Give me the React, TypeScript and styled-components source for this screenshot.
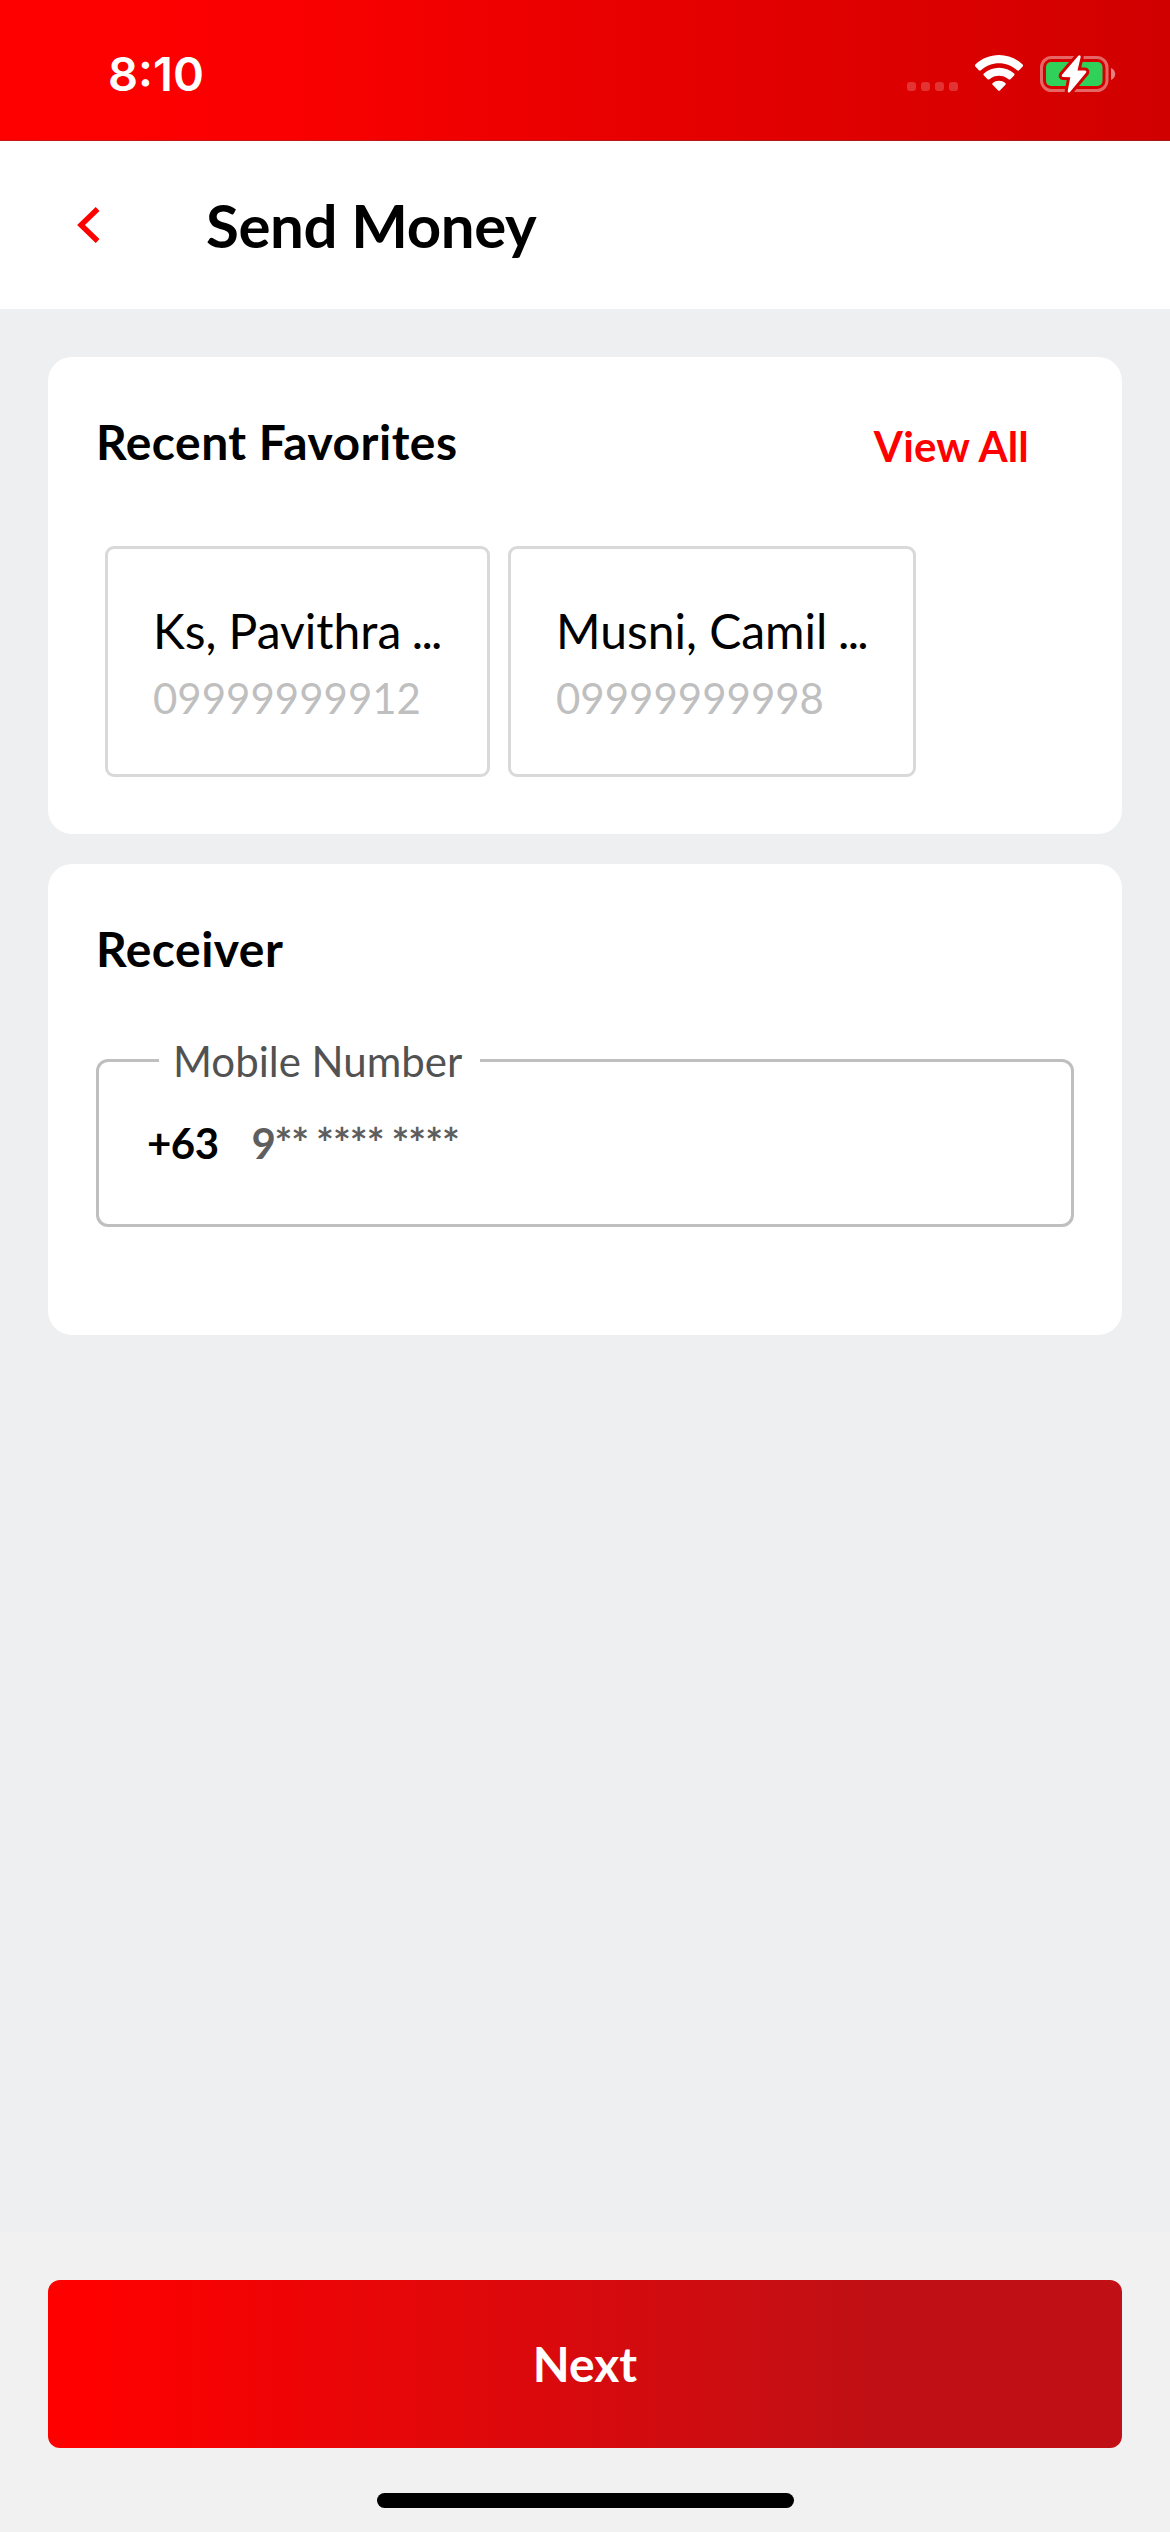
import React from "react";
import styled, { createGlobalStyle } from "styled-components";

const GlobalStyle = createGlobalStyle`
  *, *::before, *::after { box-sizing: border-box; }
  body { margin: 0; background: #eeeff1; }
`;

const Screen = styled.div`
  display: flex;
  flex-direction: column;
  width: 1170px;
  height: 2532px;
  background: #eeeff1;
  color: #000;
  font-family: Lato, "Noto Sans", sans-serif;
`;

const StatusBar = styled.div`
  display: flex;
  align-items: flex-start;
  justify-content: space-between;
  height: 141px;
  padding: 46px 53px 0 108px;
  background: linear-gradient(90deg, #ff0000 0%, #fa0000 25%, #ea0000 50%, #d10000 100%);
  box-shadow: inset 0 -1px rgba(100, 60, 60, 0.4);
`;

const Clock = styled.time`
  font: 600 47px/56px Inter, sans-serif;
  color: #fff;
`;

const StatusIcons = styled.div`
  display: flex;
  align-items: flex-start;
  gap: 15px;
  padding-top: 8px;
`;

const SignalDots = styled.div`
  display: flex;
  gap: 5px;
  margin: 28px 1px 0 0;
`;

const Dot = styled.i`
  width: 9px;
  height: 9px;
  border-radius: 3px;
  background: rgba(255, 255, 255, 0.2);
`;

const Header = styled.header`
  display: flex;
  align-items: center;
  height: 168px;
  padding-left: 74px;
  background: #fff;
`;

const BackButton = styled.button`
  display: flex;
  width: 132px;
  padding: 0;
  border: 0;
  background: none;
`;

const Title = styled.h1`
  margin: 0;
  font-size: 60px;
  font-weight: 700;
  line-height: 72px;
  letter-spacing: -0.4px;
`;

const Content = styled.main`
  display: flex;
  flex: 1;
  flex-direction: column;
  gap: 30px;
  padding: 48px 48px 0;
`;

const Card = styled.section<{ $height: number }>`
  height: ${(p) => p.$height}px;
  padding: 55px 48px 0;
  border-radius: 24px;
  background: #fff;
`;

const CardHeader = styled.div`
  display: flex;
  align-items: flex-start;
  justify-content: space-between;
`;

const CardTitle = styled.h2`
  margin: 0;
  font-size: 48px;
  font-weight: 700;
  line-height: 60px;
  letter-spacing: 0.48px;
`;

const ViewAll = styled.a`
  margin: 9px 45px 0 0;
  font-size: 42px;
  font-weight: 700;
  line-height: 50px;
  letter-spacing: 0.2px;
  color: #ff0000;
`;

const Favorites = styled.div`
  display: flex;
  gap: 18px;
  padding: 74px 0 0 9px;
`;

const Favorite = styled.div<{ $width: number }>`
  display: flex;
  flex-direction: column;
  gap: 13px;
  width: ${(p) => p.$width}px;
  height: 231px;
  padding: 53px 0 0 45px;
  border: 3px solid #d9d9d9;
  border-radius: 9px;
  white-space: nowrap;
`;

const FavoriteName = styled.span`
  font-size: 48px;
  line-height: 58px;
`;

const Ellipsis = styled.span`
  letter-spacing: -1.7px;
`;

const FavoriteNumber = styled.span`
  font-size: 42px;
  line-height: 50px;
  color: #bfbfbf;
`;

const Field = styled.fieldset`
  height: 192px;
  margin: 56px 0 0;
  padding: 32px 0 0 48px;
  border: 3px solid #bfbfbf;
  border-radius: 12px;
`;

const FieldLabel = styled.legend`
  margin-left: 12px;
  padding: 1px 18px 0 14px;
  font-size: 42px;
  line-height: 50px;
  color: #525252;
`;

const FieldRow = styled.div`
  display: flex;
  gap: 33px;
  font-size: 42px;
  font-weight: 700;
  line-height: 50px;
`;

const DialCode = styled.span`
  letter-spacing: -0.5px;
`;

const Placeholder = styled.span`
  color: #5e5e5e;
`;

const Mask = styled.span`
  margin-left: -1.6px;
  letter-spacing: -1px;
  word-spacing: -1.2px;
`;

const Footer = styled.footer`
  display: flex;
  flex-direction: column;
  align-items: center;
  height: 300px;
  padding: 48px 48px 0;
  background: #f1f1f1;
`;

const NextButton = styled.button`
  width: 100%;
  height: 168px;
  padding: 0;
  border: 0;
  border-radius: 12px;
  background: linear-gradient(90deg, #ff0000 3%, #c01015 77%);
  color: #fff;
  font: 700 48px/60px Lato, sans-serif;
`;

const HomeIndicator = styled.div`
  width: 417px;
  height: 15px;
  margin-top: 45px;
  border-radius: 8px;
  background: #000;
`;

const WifiIcon = () => (
  <svg width="50" height="40" viewBox="974 54 50 40" fill="#fff">
    <path d="M999 55c8.900 0 17.200 3.500 23.600 9.400.6.600.6 1.400.1 2l-3.600 3.800c-.5.600-1.400.6-2 0-10.300-9.400-25.900-9.400-36.200 0-.6.600-1.500.6-2 0l-3.600-3.800c-.5-.6-.5-1.400.1-2C981.800 58.500 990.100 55 999 55z" />
    <path d="M999 67.700c5.600 0 10.900 2.100 15.100 5.800.6.500.6 1.400 0 2l-3.700 3.700c-.5.500-1.300.5-1.900 0-5.500-4.600-13.500-4.600-19 0-.6.500-1.400.5-1.900 0l-3.700-3.700c-.6-.6-.6-1.500 0-2 4.200-3.700 9.500-5.800 15.100-5.800z" />
    <path d="M999 80.700c2.300 0 4.500.8 6.300 2.200.6.500.6 1.300.1 1.900l-5.500 5.700c-.5.500-1.300.5-1.800 0l-5.500-5.700c-.5-.6-.5-1.400.1-1.900 1.800-1.400 4-2.200 6.300-2.200z" />
  </svg>
);

const bolt =
  "M1078.300 55.800 1062 74.800Q1061 76.800 1063 77L1070.300 77.200 1067.700 91Q1068 93.400 1070 92L1086 72.800Q1087 70.800 1085 70.600L1077.500 70.400 1080.700 57Q1080.600 54.400 1078.300 55.800Z";

const BatteryIcon = () => (
  <svg width="78" height="42" viewBox="1039 54 78 42" fill="none">
    <mask id="bolt-gap" maskUnits="userSpaceOnUse" x="1039" y="53" width="78" height="42">
      <rect x="1039" y="53" width="78" height="42" fill="#fff" />
      <path d={bolt} fill="#000" stroke="#000" strokeWidth="6" strokeLinejoin="round" />
    </mask>
    <g mask="url(#bolt-gap)">
      <rect x="1041.500" y="57.500" width="65.500" height="33" rx="10" stroke="#fff" strokeOpacity="0.4" strokeWidth="3" />
      <rect x="1046" y="62" width="56.500" height="24" rx="5" fill="#30d158" />
    </g>
    <path d="M1111 68c5.600 2 5.600 10 0 12z" fill="#fff" fillOpacity="0.5" />
    <path d={bolt} fill="#fff" />
  </svg>
);

const favorites = [
  { name: "Ks, Pavithra", number: "09999999912", width: 385 },
  { name: "Musni, Camil", number: "09999999998", width: 408 },
];

export default function App() {
  return (
    <>
      <GlobalStyle />
      <Screen>
        <StatusBar>
          <Clock>8:10</Clock>
          <StatusIcons>
            <SignalDots>
              {[0, 1, 2, 3].map((n) => (
                <Dot key={n} />
              ))}
            </SignalDots>
            <WifiIcon />
            <BatteryIcon />
          </StatusIcons>
        </StatusBar>
        <Header>
          <BackButton aria-label="Back">
            <svg width="28" height="42" viewBox="74 204 28 42" fill="none">
              <path d="M97.600 209 81 225 97.600 241" stroke="#ff0000" strokeWidth="5.400" />
            </svg>
          </BackButton>
          <Title>Send Money</Title>
        </Header>
        <Content>
          <Card $height={477}>
            <CardHeader>
              <CardTitle>Recent Favorites</CardTitle>
              <ViewAll>View All</ViewAll>
            </CardHeader>
            <Favorites>
              {favorites.map((f) => (
                <Favorite key={f.number} $width={f.width}>
                  <FavoriteName>
                    {f.name}
                    <Ellipsis> ...</Ellipsis>
                  </FavoriteName>
                  <FavoriteNumber>{f.number}</FavoriteNumber>
                </Favorite>
              ))}
            </Favorites>
          </Card>
          <Card $height={471}>
            <CardTitle>Receiver</CardTitle>
            <Field>
              <FieldLabel>Mobile Number</FieldLabel>
              <FieldRow>
                <DialCode>+63</DialCode>
                <Placeholder>
                  9<Mask>** **** ****</Mask>
                </Placeholder>
              </FieldRow>
            </Field>
          </Card>
        </Content>
        <Footer>
          <NextButton>Next</NextButton>
          <HomeIndicator />
        </Footer>
      </Screen>
    </>
  );
}
